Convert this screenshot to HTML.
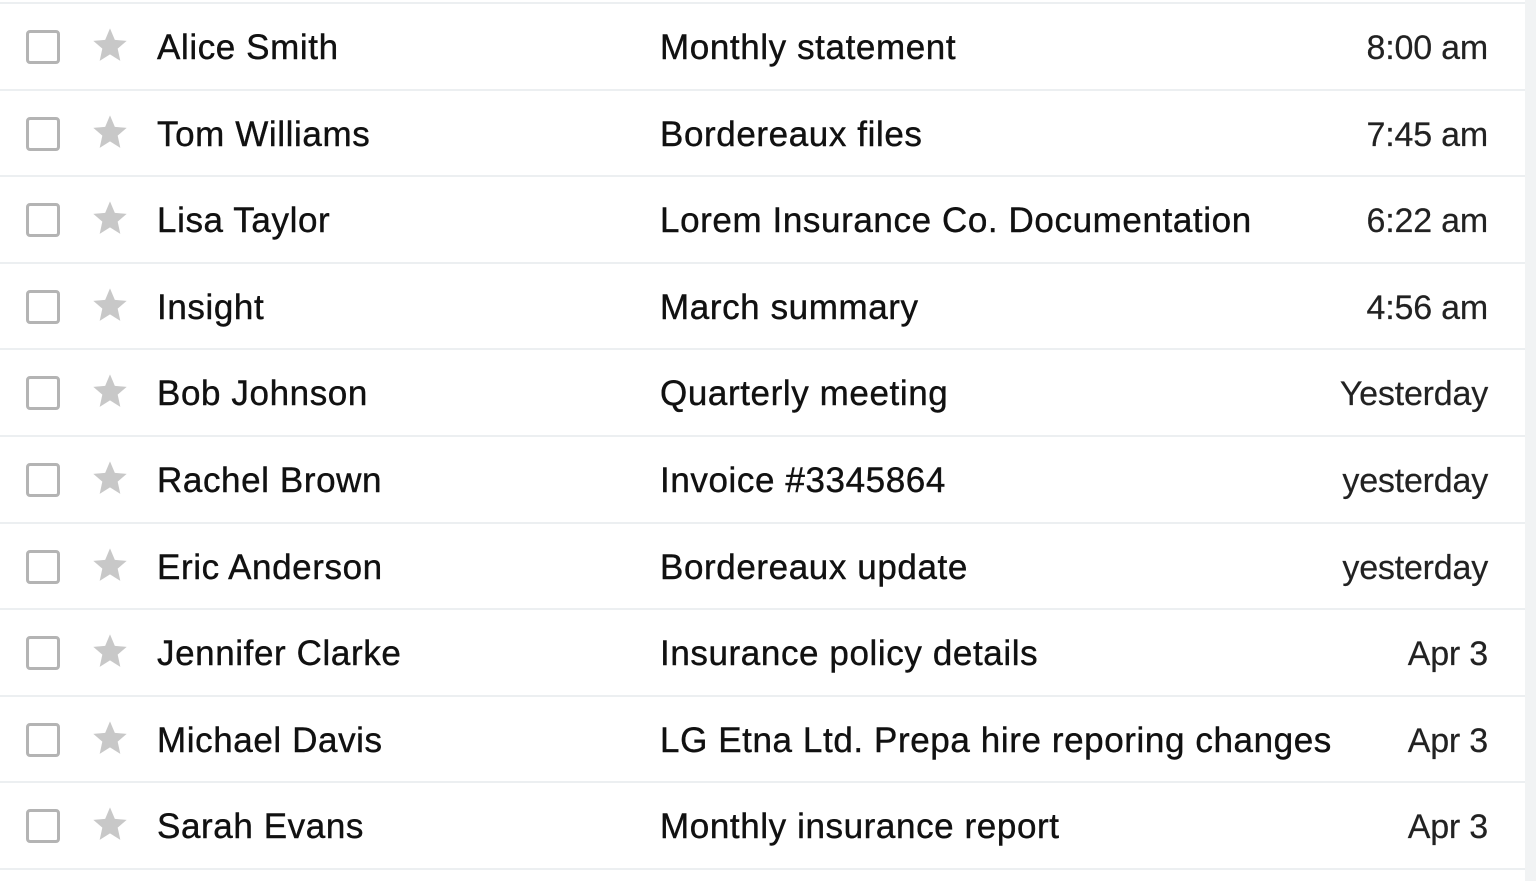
<!DOCTYPE html>
<html><head><style>
html,body{margin:0;padding:0;background:#fff;}
body{width:1536px;height:881px;position:relative;overflow:hidden;font-family:"Liberation Sans",sans-serif;}
.strip{position:absolute;left:1525px;top:0;width:11px;height:881px;background:#f1f3f4;}
.list{position:absolute;left:0;top:2px;width:1525px;border-top:2px solid #eceff1;}
.row{height:84.6px;border-bottom:2px solid #eceff1;position:relative;}
.cb{position:absolute;left:26px;top:26px;width:28px;height:28px;border:3px solid #b4b4b4;border-radius:4px;}
.st{position:absolute;left:89px;top:21px;width:42px;height:40px;}
.nm,.sb,.tm{position:absolute;top:25px;font-size:35px;line-height:38px;color:#111;white-space:nowrap;letter-spacing:0.6px;-webkit-text-stroke:0.4px #111;}
.nm{left:157px;}
.sb{left:660px;}
.tm{right:37px;color:#222;font-size:34px;letter-spacing:-0.2px;-webkit-text-stroke:0.2px #222;}
</style></head><body>
<div class="strip"></div>
<div class="list">
<div class="row"><div class="cb"></div><svg class="st" viewBox="0 0 24 24"><path fill="#c8c8c8" d="M12 2l2.9 6.9 7.1.6-5.4 4.7 1.6 7.3L12 17.6 5.8 21.5l1.6-7.3L2 9.5l7.1-.6z"/></svg><div class="nm">Alice Smith</div><div class="sb">Monthly statement</div><div class="tm">8:00 am</div></div>
<div class="row"><div class="cb"></div><svg class="st" viewBox="0 0 24 24"><path fill="#c8c8c8" d="M12 2l2.9 6.9 7.1.6-5.4 4.7 1.6 7.3L12 17.6 5.8 21.5l1.6-7.3L2 9.5l7.1-.6z"/></svg><div class="nm">Tom Williams</div><div class="sb">Bordereaux files</div><div class="tm">7:45 am</div></div>
<div class="row"><div class="cb"></div><svg class="st" viewBox="0 0 24 24"><path fill="#c8c8c8" d="M12 2l2.9 6.9 7.1.6-5.4 4.7 1.6 7.3L12 17.6 5.8 21.5l1.6-7.3L2 9.5l7.1-.6z"/></svg><div class="nm">Lisa Taylor</div><div class="sb">Lorem Insurance Co. Documentation</div><div class="tm">6:22 am</div></div>
<div class="row"><div class="cb"></div><svg class="st" viewBox="0 0 24 24"><path fill="#c8c8c8" d="M12 2l2.9 6.9 7.1.6-5.4 4.7 1.6 7.3L12 17.6 5.8 21.5l1.6-7.3L2 9.5l7.1-.6z"/></svg><div class="nm">Insight</div><div class="sb">March summary</div><div class="tm">4:56 am</div></div>
<div class="row"><div class="cb"></div><svg class="st" viewBox="0 0 24 24"><path fill="#c8c8c8" d="M12 2l2.9 6.9 7.1.6-5.4 4.7 1.6 7.3L12 17.6 5.8 21.5l1.6-7.3L2 9.5l7.1-.6z"/></svg><div class="nm">Bob Johnson</div><div class="sb">Quarterly meeting</div><div class="tm">Yesterday</div></div>
<div class="row"><div class="cb"></div><svg class="st" viewBox="0 0 24 24"><path fill="#c8c8c8" d="M12 2l2.9 6.9 7.1.6-5.4 4.7 1.6 7.3L12 17.6 5.8 21.5l1.6-7.3L2 9.5l7.1-.6z"/></svg><div class="nm">Rachel Brown</div><div class="sb">Invoice #3345864</div><div class="tm">yesterday</div></div>
<div class="row"><div class="cb"></div><svg class="st" viewBox="0 0 24 24"><path fill="#c8c8c8" d="M12 2l2.9 6.9 7.1.6-5.4 4.7 1.6 7.3L12 17.6 5.8 21.5l1.6-7.3L2 9.5l7.1-.6z"/></svg><div class="nm">Eric Anderson</div><div class="sb">Bordereaux update</div><div class="tm">yesterday</div></div>
<div class="row"><div class="cb"></div><svg class="st" viewBox="0 0 24 24"><path fill="#c8c8c8" d="M12 2l2.9 6.9 7.1.6-5.4 4.7 1.6 7.3L12 17.6 5.8 21.5l1.6-7.3L2 9.5l7.1-.6z"/></svg><div class="nm">Jennifer Clarke</div><div class="sb">Insurance policy details</div><div class="tm">Apr 3</div></div>
<div class="row"><div class="cb"></div><svg class="st" viewBox="0 0 24 24"><path fill="#c8c8c8" d="M12 2l2.9 6.9 7.1.6-5.4 4.7 1.6 7.3L12 17.6 5.8 21.5l1.6-7.3L2 9.5l7.1-.6z"/></svg><div class="nm">Michael Davis</div><div class="sb">LG Etna Ltd. Prepa hire reporing changes</div><div class="tm">Apr 3</div></div>
<div class="row"><div class="cb"></div><svg class="st" viewBox="0 0 24 24"><path fill="#c8c8c8" d="M12 2l2.9 6.9 7.1.6-5.4 4.7 1.6 7.3L12 17.6 5.8 21.5l1.6-7.3L2 9.5l7.1-.6z"/></svg><div class="nm">Sarah Evans</div><div class="sb">Monthly insurance report</div><div class="tm">Apr 3</div></div>
</div>
</body></html>
